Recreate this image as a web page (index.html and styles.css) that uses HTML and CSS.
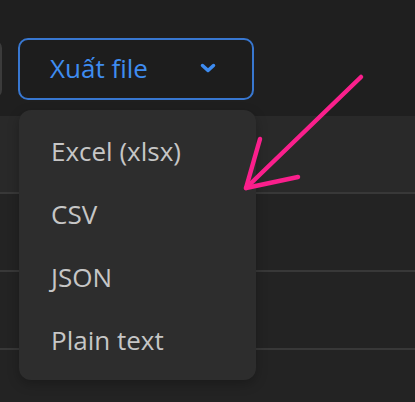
FILE: index.html
```html
<!DOCTYPE html>
<html lang="vi">
<head>
<meta charset="utf-8">
<link rel="stylesheet" href="styles.css">
</head>
<body>
<div class="page">
  <div class="toolbar">
    <div class="prev-btn"></div>
    <button class="export-btn">
      <span class="label">Xuất file</span>
      <svg class="chev" width="16" height="10" viewBox="0 0 16 10"><path d="M2.5 2.5 L8 7.5 L13.5 2.5" fill="none" stroke="#3d8bf0" stroke-width="3.5" stroke-linecap="round" stroke-linejoin="round"/></svg>
    </button>
  </div>
  <div class="table">
    <div class="row head"></div>
    <div class="row"></div>
    <div class="row"></div>
    <div class="row"></div>
  </div>
  <ul class="menu">
    <li>Excel (xlsx)</li>
    <li>CSV</li>
    <li>JSON</li>
    <li>Plain text</li>
  </ul>
  <svg class="arrow" width="415" height="402" viewBox="0 0 415 402">
    <g fill="none" stroke="#fa1f8c" stroke-width="4.5" stroke-linecap="round" stroke-linejoin="round">
      <path d="M361 77 L246 188"/>
      <path d="M260 139 L246 188 L298 177"/>
    </g>
  </svg>
</div>
</body>
</html>
```
FILE: styles.css
```css
html, body {
  margin: 0;
  padding: 0;
  background: #1f1f1f;
}
.page {
  position: relative;
  width: 415px;
  height: 402px;
  overflow: hidden;
  background: #1f1f1f;
  font-family: "Segoe UI", "Open Sans", "Noto Sans", sans-serif;
}
.toolbar {
  display: flex;
  align-items: flex-start;
  gap: 16px;
  height: 116px;
  box-sizing: border-box;
}
.prev-btn {
  width: 20px;
  height: 58px;
  margin-left: -18px;
  margin-top: 40px;
  border: 2px solid #3b3b3b;
  border-radius: 8px;
  box-sizing: border-box;
}
.export-btn {
  margin-top: 38px;
  width: 236px;
  height: 62px;
  box-sizing: border-box;
  border: 2px solid #3877d0;
  border-radius: 10px;
  background: #1d1d1d;
  display: flex;
  align-items: center;
  padding: 0 0 0 30px;
  font-family: inherit;
  cursor: pointer;
}
.label {
  color: #3f8cf0;
  font-size: 26px;
  line-height: 1;
  width: 150px;
  text-align: left;
  margin-top: -2px;
}
.chev {
  display: block;
  margin-top: -3px;
}
.table {
  background: #232323;
}
.row {
  height: 76px;
  border-bottom: 2px solid #383838;
}
.row.head {
  background: #292929;
}
.menu {
  position: absolute;
  left: 19px;
  top: 110px;
  width: 237px;
  height: 270px;
  margin: 0;
  padding: 10px 0 0 0;
  box-sizing: border-box;
  list-style: none;
  background: #2d2d2d;
  border-radius: 12px;
  box-shadow: 0 4px 12px rgba(0,0,0,0.25);
}
.menu li {
  height: 63px;
  line-height: 63px;
  padding-left: 32px;
  color: #c6c6c6;
  font-size: 26px;
}
.arrow {
  position: absolute;
  left: 0;
  top: 0;
  pointer-events: none;
}
```
